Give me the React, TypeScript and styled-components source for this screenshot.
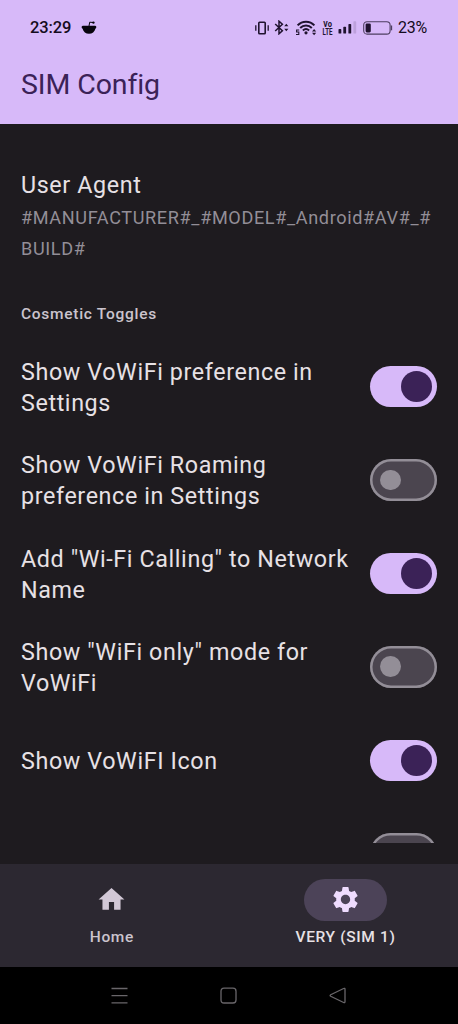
import React, { useState } from "react";
import styled, { createGlobalStyle } from "styled-components";

const color = {
  primary: "#d7b9f9",
  onPrimary: "#3b2257",
  background: "#1e1b1f",
  navBar: "#2c2831",
  text: "#e7e1e5",
  muted: "#938e97",
  label: "#cbc4cd",
  track: "#4b454f",
  pill: "#4c4358",
  ink: "#20132f",
};

const GlobalStyle = createGlobalStyle`
  * { box-sizing: border-box; }
  body { margin: 0; background: ${color.background}; }
`;

const Screen = styled.div`
  width: 458px;
  height: 1024px;
  display: flex;
  flex-direction: column;
  overflow: hidden;
  background: ${color.background};
  color: ${color.text};
  font-family: Roboto, "Liberation Sans", sans-serif;
`;

const Header = styled.header`
  height: 124px;
  flex: none;
  background: ${color.primary};
  color: ${color.onPrimary};
`;

const StatusBar = styled.div`
  height: 55px;
  padding: 0 31px 0 30px;
  display: flex;
  align-items: center;
  justify-content: space-between;
  color: #150b20;
`;

const StatusGroup = styled.div<{ $gap: number }>`
  display: flex;
  align-items: center;
  gap: ${(p) => p.$gap}px;
`;

const StatusText = styled.span<{ $size: number; $spacing: number; $weight?: number }>`
  font-size: ${(p) => p.$size}px;
  font-weight: ${(p) => p.$weight ?? 500};
  letter-spacing: ${(p) => p.$spacing}px;
  line-height: 20px;
`;

const Glyph = styled.svg`
  display: block;
  flex: none;
`;

const Title = styled.h1`
  margin: 0;
  padding: 12px 21px 0;
  font-size: 28.5px;
  line-height: 36px;
  font-weight: 400;
  letter-spacing: -0.1px;
`;

const Content = styled.main`
  height: 719px;
  flex: none;
  padding: 0 21px;
  overflow: hidden;
`;

const UserAgent = styled.section`
  padding-top: 46px;
`;

const ItemTitle = styled.div`
  font-size: 23.3px;
  line-height: 31px;
  letter-spacing: 0.61px;
`;

const ItemValue = styled.div`
  margin-top: 1px;
  font-size: 18.1px;
  line-height: 31px;
  letter-spacing: 0.63px;
  color: ${color.muted};
  overflow-wrap: anywhere;
`;

const SectionTitle = styled.h2`
  margin: 40px 0 0;
  font-size: 15.5px;
  line-height: 21px;
  font-weight: 500;
  letter-spacing: 0.72px;
  color: ${color.label};
`;

const ToggleList = styled.div`
  margin-top: 15px;
`;

const ToggleRow = styled.div`
  height: 93.4px;
  display: flex;
  align-items: center;
  justify-content: space-between;
`;

const ToggleLabel = styled(ItemTitle)`
  width: 336px;
  padding-top: 2.6px;
`;

const Track = styled.button<{ $on: boolean }>`
  width: 67px;
  height: 41.5px;
  flex: none;
  padding: 0 ${(p) => (p.$on ? 5.3 : 10.4)}px;
  display: flex;
  align-items: center;
  justify-content: ${(p) => (p.$on ? "flex-end" : "flex-start")};
  border: 0;
  box-shadow: ${(p) => (p.$on ? "none" : `inset 0 0 0 2.5px ${color.muted}`)};
  border-radius: 21px;
  background: ${(p) => (p.$on ? color.primary : color.track)};
`;

const Thumb = styled.span<{ $on: boolean }>`
  width: ${(p) => (p.$on ? 31 : 20.8)}px;
  height: ${(p) => (p.$on ? 31 : 20.8)}px;
  border-radius: 50%;
  background: ${(p) => (p.$on ? color.onPrimary : color.muted)};
`;

const NavBar = styled.nav`
  margin-top: 20.5px;
  height: 103.5px;
  flex: none;
  padding: 15.5px 0.6px 0 0;
  display: flex;
  gap: 10px;
  background: ${color.navBar};
`;

const NavItem = styled.div<{ $active?: boolean }>`
  flex: 1;
  display: flex;
  flex-direction: column;
  align-items: center;
  gap: 6px;
  color: ${(p) => (p.$active ? color.text : color.label)};
`;

const NavPill = styled.div<{ $active?: boolean }>`
  width: 83px;
  height: 41.5px;
  display: flex;
  align-items: center;
  justify-content: center;
  border-radius: 21px;
  background: ${(p) => (p.$active ? color.pill : "transparent")};
  color: ${(p) => (p.$active ? "#efdcff" : "#d2c8d6")};
`;

const NavLabel = styled.span`
  font-size: 15.5px;
  line-height: 21px;
  font-weight: 500;
  letter-spacing: 0.65px;
`;

const SystemBar = styled.footer`
  flex: 1;
  display: flex;
  align-items: center;
  justify-content: space-between;
  padding: 0 112px 0 111px;
  background: #000;
  color: #69666a;
`;

const RedditIcon = () => (
  <Glyph width="16" height="14" viewBox="0 0 16 14">
    <path d="M1.8 4.8H14.2C15.8 5 15.6 7 14.4 7.8C13.7 10.9 11.2 12.8 8 12.8S2.3 10.9 1.6 7.8C.3 7 .2 5 1.8 4.8Z" fill="#08040d" />
    <path d="M8 5L8.7 1.2L12.2 1.5" fill="none" stroke="#08040d" strokeWidth="1" />
    <circle cx="12.4" cy="1.6" r="1.2" fill="#08040d" />
  </Glyph>
);

const VibrateIcon = () => (
  <Glyph width="14" height="14" viewBox="0 0 14 14" fill="none" stroke={color.ink} strokeWidth="1.6">
    <rect x="3.8" y="1.3" width="6.4" height="11.4" rx="0.8" />
    <path d="M.8 4.2V9.8M13.2 4.2V9.8" strokeWidth="1.3" />
  </Glyph>
);

const BluetoothIcon = () => (
  <Glyph width="15" height="15" viewBox="0 0 15 15">
    <path d="M1.2 4L8.4 10.7L5 13.8V1.2L8.4 4.3L1.2 11" fill="none" stroke={color.ink} strokeWidth="1.5" />
    <path d="M10.2 6.2L12.3 3.8L14.4 6.2ZM10.2 8.8H14.4L12.3 11.2Z" fill={color.ink} />
  </Glyph>
);

const WifiIcon = () => (
  <Glyph width="22" height="16" viewBox="0 0 22 16">
    <g fill="none" stroke={color.ink} strokeWidth="2">
      <path d="M2.6 5.4C7.2.5 14.8.5 19.4 5.4" />
      <path d="M5.2 8C8.4 4.7 13.6 4.7 16.8 8" />
      <path d="M7.9 10.5C9.7 8.8 12.3 8.8 14.1 10.5" />
    </g>
    <circle cx="11" cy="12.8" r="1.6" fill={color.ink} />
    <path d="M17 11.4L19.1 9L21.2 11.4ZM17 12.8H21.2L19.1 15.2Z" fill={color.ink} />
    <path d="M4.2 10H1.6V12H3.8V14.5H1" fill="none" stroke={color.ink} strokeWidth="1.1" />
  </Glyph>
);

const VolteIcon = () => (
  <Glyph width="11" height="14" viewBox="0 0 11 14" fontSize="8.6" fontWeight="700" fill={color.ink}>
    <text x="1" y="6.4" textLength="9" lengthAdjust="spacingAndGlyphs">Vo</text>
    <text x="0.6" y="13.6" textLength="10" lengthAdjust="spacingAndGlyphs">LTE</text>
  </Glyph>
);

const SignalIcon = () => (
  <Glyph width="19" height="13" viewBox="0 0 19 13" fill={color.ink}>
    <rect x="0.5" y="8" width="2.8" height="4.6" rx="0.7" />
    <rect x="5.3" y="5.8" width="2.8" height="6.8" rx="0.7" />
    <rect x="10.4" y="3" width="2.8" height="9.6" rx="0.7" />
    <rect x="15.4" y="0.2" width="2.8" height="12.4" rx="0.7" opacity="0.14" />
  </Glyph>
);

const BatteryIcon = () => (
  <Glyph width="30" height="14" viewBox="0 0 30 14">
    <rect x="0.7" y="0.7" width="26.4" height="12.4" rx="3.4" fill="none" stroke="#4d3e60" strokeWidth="1.1" />
    <rect x="2.6" y="2.4" width="5.2" height="9" rx="1.3" fill={color.ink} />
    <path d="M28.5 4.5V9.3" stroke="#4d3e60" strokeWidth="1.3" />
  </Glyph>
);

const HomeIcon = () => (
  <Glyph width="31" height="31" viewBox="0 0 24 24" fill="currentColor">
    <path d="M10 20v-6h4v6h5v-8h3L12 3 2 12h3v8z" />
  </Glyph>
);

const SettingsIcon = () => (
  <Glyph width="31" height="31" viewBox="0 0 24 24" fill="currentColor">
    <path d="M19.14 12.94c.04-.3.06-.61.06-.94 0-.32-.02-.64-.07-.94l2.03-1.58c.18-.14.23-.41.12-.61l-1.92-3.32c-.12-.22-.37-.29-.59-.22l-2.39.96c-.5-.38-1.03-.7-1.62-.94l-.36-2.54c-.04-.24-.24-.41-.48-.41h-3.84c-.24 0-.43.17-.47.41l-.36 2.54c-.59.24-1.13.57-1.62.94l-2.39-.96c-.22-.08-.47 0-.59.22L2.74 8.87c-.12.21-.08.47.12.61l2.03 1.58c-.05.3-.09.63-.09.94s.02.64.07.94l-2.03 1.58c-.18.14-.23.41-.12.61l1.92 3.32c.12.22.37.29.59.22l2.39-.96c.5.38 1.03.7 1.62.94l.36 2.54c.05.24.24.41.48.41h3.84c.24 0 .44-.17.47-.41l.36-2.54c.59-.24 1.13-.56 1.62-.94l2.39.96c.22.08.47 0 .59-.22l1.92-3.32c.12-.22.07-.47-.12-.61l-2.01-1.58zM12 15.6c-1.98 0-3.6-1.62-3.6-3.6s1.62-3.6 3.6-3.6 3.6 1.62 3.6 3.6-1.62 3.6-3.6 3.6z" />
  </Glyph>
);

const systemPaths = [
  "M.5 1.5H16.5M.5 8.7H16.5M.5 15.9H16.5",
  "M4 1.2H13Q16 1.2 16 4.2V13Q16 16 13 16H4Q1 16 1 13V4.2Q1 1.2 4 1.2Z",
  "M14.6 1.5Q16 .8 16 2.4V14.6Q16 16.2 14.6 15.5L1.7 9.3Q.5 8.5 1.7 7.7Z",
];

const initialToggles = [
  { label: "Show VoWiFi preference in Settings", on: true },
  { label: "Show VoWiFi Roaming preference in Settings", on: false },
  { label: 'Add "Wi-Fi Calling" to Network Name', on: true },
  { label: 'Show "WiFi only" mode for VoWiFi', on: false },
  { label: "Show VoWiFI Icon", on: true },
  { label: "", on: false },
];

export default function App() {
  const [toggles, setToggles] = useState(initialToggles);
  const flip = (index: number) =>
    setToggles((list) => list.map((t, i) => (i === index ? { ...t, on: !t.on } : t)));

  return (
    <Screen>
      <GlobalStyle />
      <Header>
        <StatusBar>
          <StatusGroup $gap={10}>
            <StatusText $size={16.5} $spacing={-0.1}>23:29</StatusText>
            <RedditIcon />
          </StatusGroup>
          <StatusGroup $gap={5.3}>
            <VibrateIcon />
            <BluetoothIcon />
            <WifiIcon />
            <VolteIcon />
            <SignalIcon />
            <BatteryIcon />
            <StatusText $size={16} $spacing={-0.2} $weight={400}>23%</StatusText>
          </StatusGroup>
        </StatusBar>
        <Title>SIM Config</Title>
      </Header>
      <Content>
        <UserAgent>
          <ItemTitle>User Agent</ItemTitle>
          <ItemValue>#MANUFACTURER#_#MODEL#_Android#AV#_#<wbr />BUILD#</ItemValue>
        </UserAgent>
        <SectionTitle>Cosmetic Toggles</SectionTitle>
        <ToggleList>
          {toggles.map((t, i) => (
            <ToggleRow key={i}>
              <ToggleLabel>{t.label}</ToggleLabel>
              <Track $on={t.on} role="switch" aria-checked={t.on} onClick={() => flip(i)}>
                <Thumb $on={t.on} />
              </Track>
            </ToggleRow>
          ))}
        </ToggleList>
      </Content>
      <NavBar>
        <NavItem>
          <NavPill><HomeIcon /></NavPill>
          <NavLabel>Home</NavLabel>
        </NavItem>
        <NavItem $active>
          <NavPill $active><SettingsIcon /></NavPill>
          <NavLabel>VERY (SIM 1)</NavLabel>
        </NavItem>
      </NavBar>
      <SystemBar>
        {systemPaths.map((d) => (
          <Glyph key={d} width="17" height="17" viewBox="0 0 17 17" fill="none" stroke="currentColor" strokeWidth="1.3">
            <path d={d} />
          </Glyph>
        ))}
      </SystemBar>
    </Screen>
  );
}
